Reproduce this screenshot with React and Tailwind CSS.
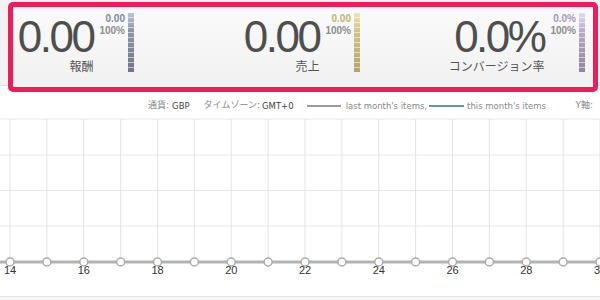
import React from "react";

const xs = Array.from({ length: 17 }, (_, i) => 10 + 36.875 * i);

function Bar({ kind }) {
  const cls = {
    blue: "[background:repeating-linear-gradient(to_bottom,transparent_0,transparent_4px,rgba(255,255,255,0.55)_4px,rgba(255,255,255,0.55)_5px),linear-gradient(to_bottom,#bcc4d0,#8c96a7_30%,#6c7789)]",
    gold: "[background:repeating-linear-gradient(to_bottom,transparent_0,transparent_4px,rgba(255,255,255,0.55)_4px,rgba(255,255,255,0.55)_5px),linear-gradient(to_bottom,#ede4b8,#d3c58a_30%,#b3a46c)]",
    purple: "[background:repeating-linear-gradient(to_bottom,transparent_0,transparent_4px,rgba(255,255,255,0.55)_4px,rgba(255,255,255,0.55)_5px),linear-gradient(to_bottom,#e2dbec,#b8abcb_30%,#91849f)]",
  }[kind];
  return <div className={"ml-[3px] w-[6px] h-[59px] " + cls} />;
}

function Stat({ value, label, small, smallColor, kind, width }) {
  return (
    <div className={"flex justify-end items-start pt-[6px] " + width}>
      <div className="flex flex-col items-end">
        <div className="mt-[2px] text-[44px] leading-[43px] tracking-[-2.5px] text-[#4e4e4e] font-['Liberation_Sans',Arial,sans-serif]">
          {value}
        </div>
        <div className="mt-[1px] text-[12px] leading-[13px] text-[#555] font-['Noto_Sans_CJK_JP',sans-serif]">
          {label}
        </div>
      </div>
      <div className="ml-[6px] flex flex-col items-end text-[10px] leading-[12px] font-bold font-['Liberation_Sans',Arial,sans-serif]">
        <span className={smallColor}>{small}</span>
        <span className="text-[#8e8e8e]">100%</span>
      </div>
      <Bar kind={kind} />
    </div>
  );
}

export default function App() {
  return (
    <div className="w-[600px] h-[300px] overflow-hidden bg-white">
      <div className="h-[94px] pt-[2px] pl-[8px] [background:linear-gradient(to_bottom,#f2f2f2_0,#f2f2f2_85px,#dcdcdc_85px,#dcdcdc_86px,#ffffff_86px)]">
        <div className="w-[590px] h-[90px] border-[5px] border-[#ef1c5c] rounded-[5px] bg-gradient-to-b from-[#fafafa] to-[#f1f1f1] flex">
          <Stat value="0.00" label="報酬" small="0.00" smallColor="text-[#8088a0]" kind="blue" width="w-[121px]" />
          <Stat value="0.00" label="売上" small="0.00" smallColor="text-[#c2b275]" kind="gold" width="w-[226px]" />
          <Stat value="0.0%" label="コンバージョン率" small="0.0%" smallColor="text-[#a597bd]" kind="purple" width="w-[225px]" />
        </div>
      </div>
      <div className="h-[24px] flex items-center pl-[148px] pr-[7px] text-[8.5px] text-[#888] font-['DejaVu_Sans','Noto_Sans_CJK_JP',sans-serif] whitespace-nowrap">
        <span className="text-[9px]">通貨:</span>
        <span className="ml-[3px] text-[#444]">GBP</span>
        <span className="ml-[14px] text-[9px]">タイムゾーン:</span>
        <span className="ml-[2px] text-[#444]">GMT+0</span>
        <span className="ml-[13px] w-[34px] h-[1.5px] bg-[#9a9a9a]" />
        <span className="ml-[5px]">last month's items,</span>
        <span className="ml-[2px] w-[35px] h-[1.5px] bg-[#5f9d98]" />
        <span className="ml-[3px]">this month's items</span>
        <span className="ml-auto text-[9px]">Y軸:</span>
      </div>
      <svg width="600" height="178" className="block">
        {[1, 37, 72.5, 108].map((y) => (
          <line key={y} x1="0" x2="600" y1={y} y2={y} stroke="#e6e6e6" strokeWidth="1" />
        ))}
        {xs.map((x) => (
          <line key={x} x1={x} x2={x} y1="1" y2="144" stroke="#e3e3e3" strokeWidth="1" />
        ))}
        <line x1="0" x2="600" y1="144" y2="144" stroke="#b3b3b3" strokeWidth="3" />
        {xs.map((x) => (
          <circle key={"c" + x} cx={x} cy="144" r="4" fill="#fff" stroke="#ababab" strokeWidth="1.5" />
        ))}
        {xs.map((x, i) =>
          i % 2 === 0 ? (
            <text key={"t" + x} x={x} y="156" textAnchor="middle" fontSize="11" fill="#333" fontFamily="Liberation Sans, Arial, sans-serif">
              {14 + i}
            </text>
          ) : null
        )}
      </svg>
      <div className="h-[8px] border-t border-[#e2e2e2] bg-[#f6f6f6]" />
    </div>
  );
}
